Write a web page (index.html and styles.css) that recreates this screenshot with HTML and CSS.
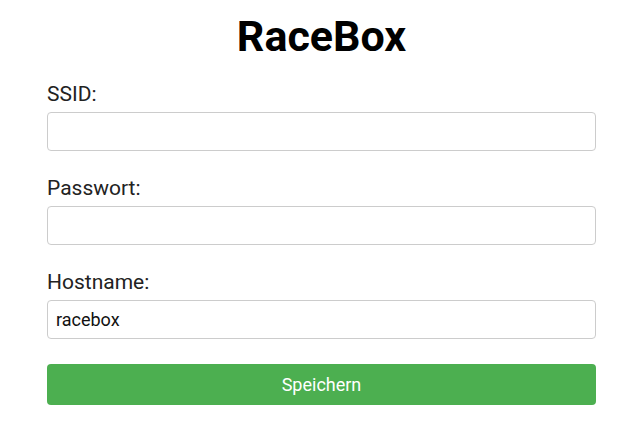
FILE: index.html
```html
<!DOCTYPE html>
<html lang="de">
<head>
<meta charset="utf-8">
<title>RaceBox</title>
<link rel="stylesheet" href="styles.css">
</head>
<body>
<div class="page">
  <h1 class="title">RaceBox</h1>
  <form class="form">
    <div class="field">
      <label class="label" for="ssid">SSID:</label>
      <input class="input" id="ssid" type="text">
    </div>
    <div class="field">
      <label class="label" for="pw">Passwort:</label>
      <input class="input" id="pw" type="password">
    </div>
    <div class="field">
      <label class="label" for="host">Hostname:</label>
      <input class="input" id="host" type="text" value="racebox">
    </div>
    <button class="button" type="button">Speichern</button>
  </form>
</div>
</body>
</html>
```

FILE: styles.css
```css
* { box-sizing: border-box; }
html, body { margin: 0; padding: 0; background: #fff; }
body {
  font-family: Roboto, "Liberation Sans", sans-serif;
  color: #222;
}
.page {
  width: 549px;
  margin-left: 47px;
  padding-top: 11px;
}
.title {
  margin: 0;
  font-size: 43px;
  font-weight: 700;
  color: #000;
  text-align: center;
  line-height: 50px;
}
.form {
  display: flex;
  flex-direction: column;
  margin-top: 21px;
}
.field {
  display: flex;
  flex-direction: column;
  margin-bottom: 25px;
}
.label {
  font-size: 21px;
  line-height: 24px;
  margin-bottom: 6px;
  color: #222;
}
.input {
  height: 39px;
  width: 100%;
  border: 1px solid #ccc;
  border-radius: 4px;
  padding: 0 8px;
  font-family: Roboto, "Liberation Sans", sans-serif;
  font-size: 18px;
  color: #111;
  background: #fff;
}
.button {
  height: 41px;
  width: 100%;
  border: none;
  border-radius: 4px;
  background: #4caf50;
  color: #fff;
  font-family: Roboto, "Liberation Sans", sans-serif;
  font-size: 18px;
}
```
